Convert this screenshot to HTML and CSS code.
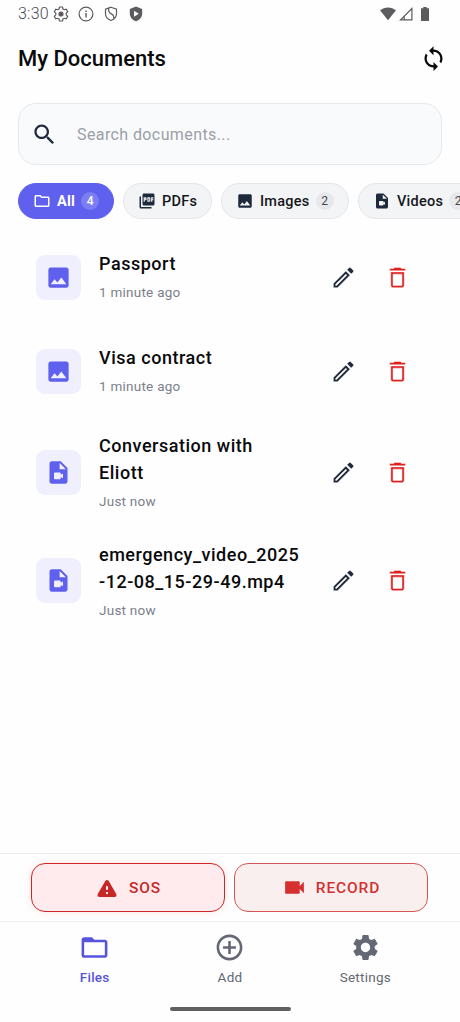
FILE: index.html
```html
<!DOCTYPE html>
<html lang="en">
<head>
<meta charset="utf-8">
<title>My Documents</title>
<link rel="stylesheet" href="styles.css">
</head>
<body>
<svg class="sprite" aria-hidden="true">
  <symbol id="search" viewBox="0 0 24 24"><path d="M15.5 14h-.79l-.28-.27C15.41 12.59 16 11.11 16 9.5 16 5.91 13.09 3 9.5 3S3 5.91 3 9.5 5.91 16 9.5 16c1.61 0 3.09-.59 4.23-1.57l.27.28v.79l5 4.99L20.49 19l-4.99-5zm-6 0C7.01 14 5 11.99 5 9.5S7.01 5 9.5 5 14 7.01 14 9.5 11.99 14 9.5 14z"/></symbol>
  <symbol id="sync" viewBox="0 0 24 24"><path d="M12 4V1L8 5l4 4V6c3.31 0 6 2.69 6 6 0 1.01-.25 1.97-.7 2.8l1.46 1.46C19.54 15.03 20 13.57 20 12c0-4.42-3.58-8-8-8zm0 14c-3.31 0-6-2.69-6-6 0-1.01.25-1.97.7-2.8L5.24 7.74C4.46 8.97 4 10.43 4 12c0 4.42 3.58 8 8 8v3l4-4-4-4v3z"/></symbol>
  <symbol id="folder-outline" viewBox="0 0 24 24"><path d="M9.17 6l2 2H20v10H4V6h5.17M10 4H4c-1.1 0-1.99.9-1.99 2L2 18c0 1.1.9 2 2 2h16c1.1 0 2-.9 2-2V8c0-1.1-.9-2-2-2h-8l-2-2z"/></symbol>
  <symbol id="folder-open" viewBox="0 0 24 24"><path d="M20 6h-8l-2-2H4c-1.1 0-1.99.9-1.99 2L2 18c0 1.1.9 2 2 2h16c1.1 0 2-.9 2-2V8c0-1.1-.9-2-2-2zm0 12H4V8h16v10z"/></symbol>
  <symbol id="pdf" viewBox="0 0 24 24"><path d="M20 2H8c-1.1 0-2 .9-2 2v12c0 1.1.9 2 2 2h12c1.1 0 2-.9 2-2V4c0-1.1-.9-2-2-2zm-8.5 7.5c0 .83-.67 1.5-1.5 1.5H9v2H7.5V7H10c.83 0 1.5.67 1.5 1.5v1zm5 2c0 .83-.67 1.5-1.5 1.5h-2.5V7H15c.83 0 1.5.67 1.5 1.5v3zm4-3H19v1h1.5V11H19v2h-1.5V7h3v1.5zM9 9.5h1v-1H9v1zM4 6H2v14c0 1.1.9 2 2 2h14v-2H4V6zm10 5.5h1v-3h-1v3z"/></symbol>
  <symbol id="image" viewBox="0 0 24 24"><path d="M21 19V5c0-1.1-.9-2-2-2H5c-1.1 0-2 .9-2 2v14c0 1.1.9 2 2 2h14c1.1 0 2-.9 2-2zM8.5 13.5l2.5 3.01L14.5 12l4.5 6H5l3.5-4.5z"/></symbol>
  <symbol id="video-file" viewBox="0 0 24 24"><path d="M14 2H6.01c-1.1 0-2 .89-2 2L4 20c0 1.1.89 2 1.99 2H18c1.1 0 2-.9 2-2V8l-6-6zm-1 7V3.5L18.5 9H13zm1 5l2-1.06v4.12L14 16v1c0 .55-.45 1-1 1H9c-.55 0-1-.45-1-1v-4c0-.55.45-1 1-1h4c.55 0 1 .45 1 1v1z"/></symbol>
  <symbol id="edit" viewBox="0 0 24 24"><path d="M14.06 9.02l.92.92L5.92 19H5v-.92l9.06-9.06M17.66 3c-.25 0-.51.1-.7.29l-1.83 1.83 3.75 3.75 1.83-1.83c.39-.39.39-1.02 0-1.41l-2.34-2.34c-.2-.2-.45-.29-.71-.29zm-3.6 3.19L3 17.25V21h3.75L17.81 9.94l-3.75-3.75z"/></symbol>
  <symbol id="trash" viewBox="0 0 24 24"><path d="M6 19c0 1.1.9 2 2 2h8c1.1 0 2-.9 2-2V7H6v12zM8 9h8v10H8V9zm7.5-5l-1-1h-5l-1 1H5v2h14V4z"/></symbol>
  <symbol id="warning" viewBox="0 0 24 24"><path d="M4.47 21h15.06c1.54 0 2.5-1.67 1.73-3L13.73 4.99c-.77-1.33-2.69-1.33-3.46 0L2.74 18c-.77 1.33.19 3 1.73 3zM12 14c-.55 0-1-.45-1-1v-2c0-.55.45-1 1-1s1 .45 1 1v2c0 .55-.45 1-1 1zm1 4h-2v-2h2v2z"/></symbol>
  <symbol id="videocam" viewBox="0 0 24 24"><path d="M17 10.5V7c0-.55-.45-1-1-1H4c-.55 0-1 .45-1 1v10c0 .55.45 1 1 1h12c.55 0 1-.45 1-1v-3.5l4 4v-11l-4 4z"/></symbol>
  <symbol id="add" viewBox="0 0 24 24"><path d="M13 7h-2v4H7v2h4v4h2v-4h4v-2h-4V7zm-1-5C6.48 2 2 6.48 2 12s4.48 10 10 10 10-4.48 10-10S17.52 2 12 2zm0 18c-4.41 0-8-3.59-8-8s3.59-8 8-8 8 3.59 8 8-3.59 8-8 8z"/></symbol>
  <symbol id="gear" viewBox="0 0 24 24"><path d="M19.14 12.94c.04-.3.06-.61.06-.94 0-.32-.02-.64-.07-.94l2.03-1.58c.18-.14.23-.41.12-.61l-1.92-3.32c-.12-.22-.37-.29-.59-.22l-2.39.96c-.5-.38-1.03-.7-1.62-.94l-.36-2.54c-.04-.24-.24-.41-.48-.41h-3.84c-.24 0-.43.17-.47.41l-.36 2.54c-.59.24-1.13.57-1.62.94l-2.39-.96c-.22-.08-.47 0-.59.22L2.74 8.87c-.12.21-.08.47.12.61l2.03 1.58c-.05.3-.09.63-.09.94s.02.64.07.94l-2.03 1.58c-.18.14-.23.41-.12.61l1.92 3.32c.12.22.37.29.59.22l2.39-.96c.5.38 1.03.7 1.62.94l.36 2.54c.05.24.24.41.48.41h3.84c.24 0 .44-.17.47-.41l.36-2.54c.59-.24 1.13-.56 1.62-.94l2.39.96c.22.08.47 0 .59-.22l1.92-3.32c.12-.22.07-.47-.12-.61l-2.01-1.58zM12 15.6c-1.98 0-3.6-1.62-3.6-3.6s1.62-3.6 3.6-3.6 3.6 1.62 3.6 3.6-1.62 3.6-3.6 3.6z"/></symbol>
</svg>

<div class="app">
  <header class="status">
    <span class="clock">3:30</span>
    <div class="status-left">
      <svg class="st-icon" viewBox="0 0 16 16"><path class="line" d="M6.500 1h3l.5 2 1.200.7 2-.6 1.500 2.600-1.500 1.500v1.600l1.500 1.500-1.500 2.600-2-.6-1.200.7-.5 2h-3l-.5-2-1.200-.7-2 .6-1.500-2.600 1.500-1.500V7.200L1.300 5.700l1.500-2.600 2 .6L6 3z"/><circle cx="8" cy="8" r="2.600"/></svg>
      <svg class="st-icon" viewBox="0 0 16 16"><circle class="line" cx="8" cy="8" r="6.900"/><path d="M7.300 7h1.400v4.500H7.300zM7.300 4.500h1.400v1.400H7.300z"/></svg>
      <svg class="st-icon" viewBox="0 0 16 16"><path class="line" d="M8 1.200l5.500 2v4.300c0 3.300-2.200 5.800-5.500 7-3.300-1.200-5.500-3.700-5.500-7V3.200zM5.800 2.200c-.8 3 .4 4.600 2.500 5.700s3 2.600 2.300 5"/></svg>
      <svg class="st-icon" viewBox="0 0 16 16"><path fill-rule="evenodd" d="M8 .6l6.200 2.300v4.600c0 3.700-2.500 6.500-6.200 7.800-3.700-1.300-6.200-4.100-6.200-7.800V2.900zM6 4.700v6l4.800-3z"/></svg>
    </div>
    <div class="status-right">
      <svg class="wifi" viewBox="0 0 16 14"><path d="M0 3.300C4.500-.6 11.500-.6 16 3.300L8 13.300z"/></svg>
      <svg class="signal" viewBox="0 0 14 14"><path class="line" d="M1.500 12.900L12.900 1.500v11.400zM5.200 9.500v3"/></svg>
      <svg class="battery" viewBox="0 0 8 14"><path d="M2.300 0h3.400v1.300H8V14H0V1.300h2.300z"/></svg>
    </div>
  </header>

  <div class="titlebar">
    <h1>My Documents</h1>
    <svg class="icon"><use href="#sync"/></svg>
  </div>

  <label class="search"><svg class="icon"><use href="#search"/></svg><span>Search documents...</span></label>

  <div class="chips">
    <div class="chip chip-all"><svg><use href="#folder-outline"/></svg><span class="chip-label">All</span><span class="count">4</span></div>
    <div class="chip chip-pdf"><svg><use href="#pdf"/></svg><span class="chip-label">PDFs</span></div>
    <div class="chip chip-img"><svg><use href="#image"/></svg><span class="chip-label">Images</span><span class="count">2</span></div>
    <div class="chip chip-vid"><svg><use href="#video-file"/></svg><span class="chip-label">Videos</span><span class="count">2</span></div>
  </div>

  <main class="list">
    <article class="row">
      <div class="thumb"><svg class="icon"><use href="#image"/></svg></div>
      <div class="info"><h2>Passport</h2><p>1 minute ago</p></div>
      <svg class="icon edit"><use href="#edit"/></svg><svg class="icon trash"><use href="#trash"/></svg>
    </article>
    <article class="row">
      <div class="thumb"><svg class="icon"><use href="#image"/></svg></div>
      <div class="info"><h2>Visa contract</h2><p>1 minute ago</p></div>
      <svg class="icon edit"><use href="#edit"/></svg><svg class="icon trash"><use href="#trash"/></svg>
    </article>
    <article class="row tall">
      <div class="thumb"><svg class="icon"><use href="#video-file"/></svg></div>
      <div class="info"><h2>Conversation with<br>Eliott</h2><p>Just now</p></div>
      <svg class="icon edit"><use href="#edit"/></svg><svg class="icon trash"><use href="#trash"/></svg>
    </article>
    <article class="row tall">
      <div class="thumb"><svg class="icon"><use href="#video-file"/></svg></div>
      <div class="info"><h2>emergency_video_2025<br>-12-08_15-29-49.mp4</h2><p>Just now</p></div>
      <svg class="icon edit"><use href="#edit"/></svg><svg class="icon trash"><use href="#trash"/></svg>
    </article>
  </main>

  <div class="actions">
    <div class="action sos"><svg><use href="#warning"/></svg><span>SOS</span></div>
    <div class="action record"><svg><use href="#videocam"/></svg><span>RECORD</span></div>
  </div>

  <nav class="tabs">
    <div class="tab active"><svg><use href="#folder-open"/></svg><span>Files</span></div>
    <div class="tab"><svg><use href="#add"/></svg><span>Add</span></div>
    <div class="tab"><svg><use href="#gear"/></svg><span>Settings</span></div>
  </nav>
  <div class="home"></div>
</div>
</body>
</html>
```
FILE: styles.css
```css
* { box-sizing: border-box; margin: 0; padding: 0; }
body { background: #fefefe; font-family: Roboto, sans-serif; color: #0a0a0c; }
svg { fill: currentColor; display: block; flex: none; }
.sprite { position: absolute; width: 0; height: 0; }
.icon { width: 27px; height: 27px; }
.line { fill: none; stroke: currentColor; stroke-width: 1.2; }
.app { width: 460px; height: 1022px; overflow: hidden; display: flex; flex-direction: column; }

.status { height: 27px; padding: 0 31px 0 18px; display: flex; align-items: center; color: #5c5c5e; flex: none; }
.clock { font-size: 16px; font-weight: 300; letter-spacing: .2px; width: 35px; color: #4d4d4f; }
.status-left { display: flex; gap: 9px; }
.st-icon { width: 16px; height: 16px; }
.status-right { margin-left: auto; display: flex; align-items: center; gap: 3px; }
.wifi { width: 16px; height: 14px; }
.signal { width: 14px; height: 14px; }
.battery { width: 8px; height: 14px; margin-left: 5px; }

.titlebar { height: 76px; padding: 0 13.500px 12px 18px; display: flex; align-items: center; justify-content: space-between; flex: none; }
h1 { font-size: 22px; font-weight: 500; line-height: 30px; }
.titlebar .icon { margin-bottom: 2px; }

.search { height: 62px; margin: 0 18px 1px; padding: 0 12px; border: 1px solid #e6e8eb; border-radius: 18px; background: #f9fafc; display: flex; align-items: center; gap: 19px; color: #1e293b; flex: none; }
.search span { font-size: 16px; letter-spacing: .4px; color: #9b9fa6; }

.chips { display: flex; gap: 9px; padding: 17px 0 0 18px; height: 54px; flex: none; }
.chip { height: 36px; border-radius: 18px; border: 1px solid #e4e6ea; background: #f3f4f6; display: flex; align-items: center; padding: 0 0 0 13.500px; flex: none; color: #1e293b; }
.chip svg { width: 18px; height: 18px; margin-right: 6.500px; }
.chip-label { font-size: 14.500px; font-weight: 500; letter-spacing: .25px; color: #16181d; position: relative; top: .5px; }
.count { margin-left: 6px; width: 18px; height: 18px; border-radius: 9px; background: #e7e8eb; font-size: 12px; font-weight: 400; line-height: 18px; text-align: center; color: #45484f; }
.chip-all { width: 96px; background: #6060ee; border-color: #6060ee; color: #fff; }
.chip-all .chip-label { color: #fff; font-weight: 700; }
.chip-all .count { background: #7d7df3; color: #fff; font-weight: 500; }
.chip-pdf { width: 89px; }
.chip-img { width: 128px; }
.chip-vid { width: 128px; }

.list { flex: 1; padding: 10.500px 49px 0 36px; }
.row { height: 94px; display: flex; align-items: center; }
.tall { height: 108px; }
.thumb { width: 45px; height: 45px; border-radius: 9px; background: #f0effd; color: #6060ee; display: grid; place-items: center; }
.info { margin-left: 18px; flex: 1; white-space: nowrap; padding-bottom: 2px; }
.tall .info { padding-bottom: 0; }
.tall:last-child .info { padding-top: 2px; }
h2 { font-size: 18px; font-weight: 500; line-height: 27px; letter-spacing: .52px; }
.info p { margin-top: 4px; font-size: 13.500px; line-height: 23px; letter-spacing: .25px; color: #7c808a; }
.edit, .trash { stroke: #fefefe; stroke-width: .4; }
.edit { color: #1e293b; margin-right: 27px; }
.trash { color: #e01f1f; }

.actions { height: 69px; border-top: 1.500px solid #ebebed; padding: 9px 32px 0 31px; display: flex; gap: 9px; flex: none; border-bottom: 1px solid #efeff1; }
.action { flex: 1; height: 49px; border-radius: 14px; display: flex; align-items: center; justify-content: center; gap: 10px; font-size: 15.500px; font-weight: 500; letter-spacing: .85px; }
.action svg { width: 24px; height: 24px; }
.sos { border: 1.500px solid #cf2626; background: #ffebed; color: #c62828; box-shadow: 0 0 9px rgba(240, 60, 60, .12); }
.record { border: 1px solid #d85555; background: #f9efef; color: #d62f2f; }
.record svg { width: 25px; height: 25px; margin-right: -1px; }

.tabs { height: 85px; padding: 10px 27px 0; display: flex; flex: none; color: #646874; }
.tab { flex: 1; display: flex; flex-direction: column; align-items: center; font-size: 13.500px; line-height: 18px; letter-spacing: .25px; }
.tab svg { width: 31px; height: 31px; margin-bottom: 5px; }
.active { color: #5754dc; font-weight: 500; }
.home { width: 121px; height: 4px; border-radius: 2px; background: #606062; margin: 0 auto 11px; flex: none; }
```
